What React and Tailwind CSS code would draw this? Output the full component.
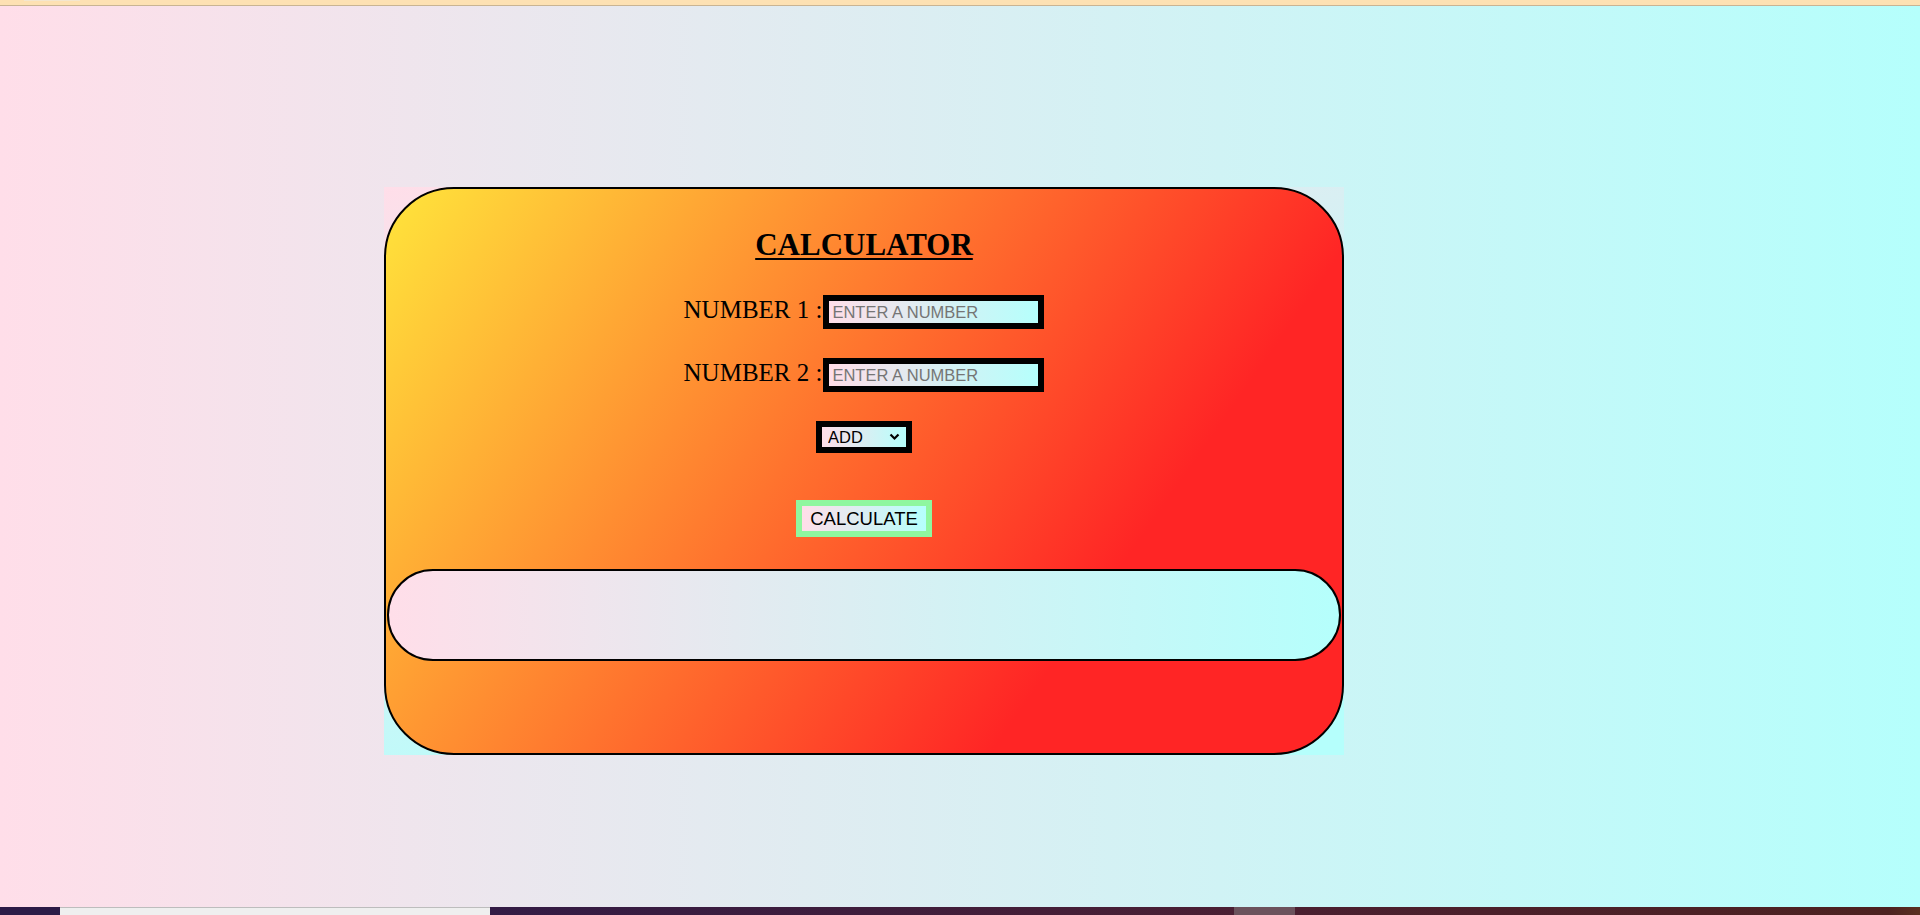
import React, { useState } from 'react';

const App = () => {
    const [num1, setNum1] = useState('');
    const [num2, setNum2] = useState('');
    const [op, setOp] = useState('add');
    const [result, setResult] = useState('');

    const handleCalculate = () => {
        const a = parseFloat(num1);
        const b = parseFloat(num2);
        if (isNaN(a) || isNaN(b)) return setResult('');
        if (op === 'add') setResult(a + b);
        if (op === 'sub') setResult(a - b);
        if (op === 'mul') setResult(a * b);
        if (op === 'div') setResult(a / b);
    };

    const fieldClass = "w-[221px] h-[34px] border-[6px] border-black px-[3px] text-[16.5px] leading-[19px] text-black placeholder:text-[#757575] bg-[linear-gradient(90deg,#FFDEE9,#B5FFFC)] outline-none font-['Liberation_Sans',Arial,sans-serif]";

    return (
        <div className="w-full h-[915px] flex flex-col overflow-hidden font-['Liberation_Serif',serif]">
            {/* top strip */}
            <div className="h-[6px] bg-[#fde1b3] border-b border-[#c9b493] relative shrink-0">
                <div className="absolute left-[24px] top-0 w-[56px] h-[1px] bg-[#f3e6cf]"></div>
            </div>

            <div className="flex-1 bg-[linear-gradient(90deg,#FFDEE9_0%,#B5FFFC_100%)] pl-[384px] pt-[181px]">
                <div className="w-[960px] h-[568px] bg-[linear-gradient(160deg,#FFDEE9_0%,#B5FFFC_75%)]">
                    <div className="w-full h-full rounded-[70px] border-2 border-black bg-[linear-gradient(125deg,#FFE53B_0%,#FF2525_74%)] flex flex-col items-center">
                        <h1 className="mt-[38px] text-[31px] leading-[36px] font-bold underline decoration-2 underline-offset-[3px] text-black">CALCULATOR</h1>

                        <div className="mt-[32px] flex items-baseline">
                            <span className="text-[25px] leading-[28px] text-black mr-[1px]">NUMBER 1 :</span>
                            <input type="number" value={num1} onChange={(e) => setNum1(e.target.value)} placeholder="ENTER A NUMBER" className={fieldClass} />
                        </div>

                        <div className="mt-[29px] flex items-baseline">
                            <span className="text-[25px] leading-[28px] text-black mr-[1px]">NUMBER 2 :</span>
                            <input type="number" value={num2} onChange={(e) => setNum2(e.target.value)} placeholder="ENTER A NUMBER" className={fieldClass} />
                        </div>

                        <div className="mt-[29px] relative">
                            <select value={op} onChange={(e) => setOp(e.target.value)} className="appearance-none block w-[96px] h-[32px] border-[6px] border-black pl-[6px] text-[16.5px] leading-[19px] text-black font-['Liberation_Sans',Arial,sans-serif] bg-[linear-gradient(90deg,#FFDEE9,#B5FFFC)] outline-none">
                                <option value="add">ADD</option>
                                <option value="sub">SUBTRACT</option>
                                <option value="mul">MULTIPLY</option>
                                <option value="div">DIVIDE</option>
                            </select>
                            <svg className="absolute left-[73px] top-[12px] pointer-events-none" width="11" height="8" viewBox="0 0 11 8">
                                <path d="M1.5 1.5 L5.5 5.5 L9.5 1.5" fill="none" stroke="black" strokeWidth="2.2" />
                            </svg>
                        </div>

                        <button onClick={handleCalculate} className="mt-[47px] w-[136px] h-[37px] border-[6px] border-[#8ff79f] text-[18.5px] leading-[20px] text-black font-['Liberation_Sans',Arial,sans-serif] bg-[linear-gradient(90deg,#FFDEE9,#B5FFFC)]">CALCULATE</button>

                        <div className="mt-[32px] self-stretch mx-px h-[92px] rounded-full border-2 border-black bg-[linear-gradient(90deg,#FFDEE9,#B5FFFC)] flex items-center justify-center text-[24px] text-black">
                            {result}
                        </div>
                    </div>
                </div>
            </div>

            {/* taskbar */}
            <div className="h-[8px] shrink-0 flex">
                <div className="w-[60px] bg-[#2c1b46]"></div>
                <div className="w-[430px] bg-[#efefef] border-t border-[#bdbdbd]"></div>
                <div className="w-[744px] bg-[linear-gradient(90deg,#331b45,#4a1f33)]"></div>
                <div className="w-[61px] bg-[#6b525c]"></div>
                <div className="flex-1 bg-[linear-gradient(90deg,#4a1f30,#4d2220_95%,#5a3020)]"></div>
            </div>
        </div>
    );
};

export default App;
